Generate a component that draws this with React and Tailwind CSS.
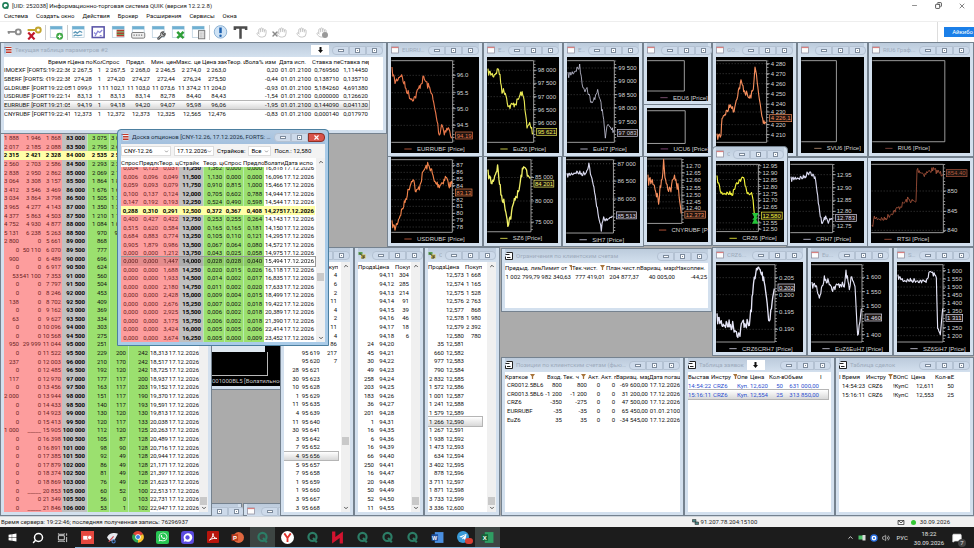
import clsx from "clsx";
import { FaWhatsapp, FaWindows, FaTelegramPlane, FaYandex } from "react-icons/fa";
import { Search, Minus, X, Copy, Hand, ChevronUp, Volume2, MessageSquare, Wrench } from "lucide-react";

const menu = ["Система", "Создать окно", "Действия", "Брокер", "Расширения", "Сервисы", "Окна"];

const params = [
  ["IMOEXF [FORTS:", "19:22:36", "2 267,5", "1", "2 267,5", "2 268,0", "2 246,5", "2 274,0", "2 263,0", "", "", "0,20", "01.01.2100", "0,769560", "1,114450"],
  ["SBERF [FORTS: Ф", "19:22:38", "274,28", "1", "274,20", "274,27", "272,44", "276,24", "275,50", "", "", "-0,44", "01.01.2100", "0,138710", "0,135710"],
  ["GLDRUBF [FORT", "19:22:05", "11 099,9", "1", "11 102,1", "11 103,0", "11 073,6", "11 374,2", "11 204,0", "", "", "-0,93", "01.01.2100", "5,184260", "4,691380"],
  ["USDRUBF [FORT", "19:22:14", "83,13", "1", "83,13", "83,14", "82,78", "84,40", "84,43", "", "", "-1,54", "01.01.2100", "0,000000", "0,126620"],
  ["EURRUBF [FORT", "19:21:05", "94,19", "1", "94,18", "94,20", "94,07", "95,98", "96,06", "", "", "-1,95", "01.01.2100", "0,144090", "0,041130"],
  ["CNYRUBF [FORT", "19:22:41", "12,373", "1", "12,372", "12,373", "12,325", "12,565", "12,476", "", "", "-0,83", "01.01.2100", "0,000140", "0,017970"],
];

const board = `1 888|1 946|1 868|83 000|3 075|3 020|||
2 017|2 185|2 088|83 500|2 795|2 680|||
2 315|2 421|2 328|84 000|2 535|2 510|||
2 560|2 703|2 586|84 500|2 293|2 200|||
2 838|2 950|2 862|85 000|2 069|2 100|||
3 064|3 308|3 157|85 500|1 864|1 830|||
3 412|3 546|3 469|86 000|1 676|1 600|||
3 034|3 864|3 798|86 500|1 505|1 200|||
3 965|4 277|4 143|87 000|1 350|1 200|||
4 377|5 863|4 503|87 500|1 210|1 100|||
4 752|4 930|4 877|88 000|1 084|1 000|||
5 131|6 238|5 263|88 500|970|9 00|||
2 800|0|5 661|89 000|868|||
0|50 110|6 070|89 500|777|||
900|0|6 489|90 000|696|||
0|0|6 917|90 500|624|||
53|541 100|7 353|91 000|560|||
0|0|7 797|91 500|504|||
0|0|8 246|92 000|453|||
138|0|8 702|92 500|409|||
0|0|9 162|93 000|369|||
63|0|9 627|93 500|334|||
0|0|10 096|94 000|303|||
0|0|10 568|94 500|275|||
950|29 999|11 044|95 000|251||||
0|0|11 522|95 500|229|200|242|18,313|17.12.2026
237|0|12 003|96 000|210|170|242|18,517|17.12.2026
0|0|12 485|96 500|192|120|242|18,725|17.12.2026
117|0|12 970|97 000|177|117|200|18,937|17.12.2026
0|0|13 456|97 500|163|117|203|19,152|17.12.2026
12 000|0|13 944|98 000|151|117|190|19,370|17.12.2026
0|0|14 433|98 500|140|117|193|19,591|17.12.2026
0|0|14 923|99 000|130|120|130|19,813|17.12.2026
0|0|15 413|99 500|120|117|133|20,038|17.12.2026
1 000|_____|15 905|100 000|112|120|125|20,263|17.12.2026
0|0|16 398|100 500|105|87|128|20,489|17.12.2026
0|0|16 891|101 000|98|90|128|20,716|17.12.2026
0|0|17 385|101 500|92|49|128|20,944|17.12.2026
0|0|17 879|102 000|86|49|128|21,171|17.12.2026
0|0|18 374|102 500|81|49|128|21,397|17.12.2026
0|0|18 869|103 000|76|49|128|21,623|17.12.2026
0|_____|20 853|105 000|60|52|100|22,513|17.12.2026
0|0|21 349|105 500|56|0|103|22,731|17.12.2026
0|_____|21 846|106 000|53|1|102|22,947|17.12.2026`.split("\n").map((r) => r.split("|"));

const options = `0,004|0,123|0,031|11,250|1,362|0,000|0,000|16,818
0,006|0,096|0,049|11,500|1,130|0,000|0,000|16,096
0,059|0,093|0,079|11,750|0,910|0,815|1,000|15,466
0,100|0,137|0,124|12,000|0,705|0,602|0,788|14,944
0,147|0,192|0,193|12,250|0,524|0,490|0,598|14,544
0,288|0,310|0,291|12,500|0,372|0,367|0,408|14,275
0,400|0,427|0,422|12,750|0,253|0,255|0,264|14,143
0,515|0,620|0,584|13,000|0,165|0,165|0,181|14,150
0,684|0,883|0,774|13,250|0,105|0,110|0,121|14,295
0,905|1,879|0,986|13,500|0,067|0,064|0,080|14,572
0,000|0,000|1,212|13,750|0,043|0,025|0,058|14,975
0,000|0,000|1,447|14,000|0,028|0,028|0,040|15,494
0,000|0,000|1,688|14,250|0,020|0,015|0,026|16,118
0,000|0,000|1,933|14,500|0,014|0,002|0,017|16,835
0,000|0,000|2,180|14,750|0,011|0,002|0,020|17,633
0,000|0,000|2,428|15,000|0,009|0,004|0,015|18,499
0,000|0,000|2,676|15,250|0,007|0,002|0,018|19,422
0,000|0,000|2,925|15,500|0,006|0,002|0,018|20,389
0,000|0,000|3,175|15,750|0,006|0,002|0,018|21,390
0,000|0,000|3,424|16,000|0,005|0,005|0,006|22,414
0,000|0,000|3,674|16,250|0,005|0,000|0,009|23,452`.split("\n").map((r) => [...r.split("|"), "17.12.2026"]);

const toRows = (s) => s.split(";").map((r) => r.split("|"));

const domEu = toRows("||4;||6;||2;||11;||4;||2;||11;||4;||86;|95 619|217;|95 620|7;28|95 621|;30|95 623|;10|95 628|;1|95 629|;11|95 635|;4|95 639|;11|95 640|;30|95 641|;3|95 642|;7|95 652|;4|95 656|;5|95 657|;7|95 658|;1|95 659|;1|95 660|;3|95 667|;3|95 668|");
const domEur = toRows("|94,11|304;|94,12|285;|94,13|214;|94,14|91;|94,15|39;|94,16|46;|94,17|18;|94,18|6;24|94,20|;45|94,21|;30|94,22|;49|94,23|;258|94,24|;203|94,25|;183|94,26|;36|94,27|;201|94,28|;1|94,31|;16|94,35|;6|94,36|;16|94,39|;66|94,40|;250|94,41|;16|94,47|;20|94,48|;50|94,49|;52|94,50|;11|94,55|");
const domCny = toRows("|12,573|1 668;|12,574|1 165;|12,575|1 528;|12,576|2 763;|12,577|868;|12,578|1 980;|12,579|2 392;|12,580|780;35|12,581|;660|12,582|;977|12,583|;790|12,584|;2 832|12,585|;1 572|12,586|;1 001|12,587|;1 241|12,588|;1 579|12,589|;1 266|12,590|;1 267|12,591|;1 938|12,592|;1 473|12,593|;634|12,594|;3 402|12,595|;878|12,596|;3 711|12,597|;1 871|12,598|;3 733|12,599|;3 336|12,600|");

const limits = [["1 002 799,79", "982 340,63", "777 419,01", "204 877,37", "40 005,00", "-44,25"]];

const positions = [
  ["CR0012.5BL6", "800", "800", "0", "0", "-69 600,00", "17.12.2026"],
  ["CR0013.5BL6", "-1 200", "-1 200", "0", "0", "31 200,00", "17.12.2026"],
  ["CRZ6", "-350", "-275", "0", "0", "47 500,00", "17.12.2026"],
  ["EURRUBF", "-35", "-35", "0", "0", "65 450,00", "01.01.2100"],
  ["EuZ6", "35", "35", "0", "0", "-34 545,00", "17.12.2026"],
];

const orders = [
  ["14:54:22", "CRZ6", "Куп.", "12,620", "50", "631 000,00", ""],
  ["15:16:11", "CRZ6", "Куп.", "12,554", "25", "313 850,00", ""],
];

const trades = [
  ["", "14:54:23", "CRZ6", "!КупС", "12,611", "50"],
  ["", "15:16:11", "CRZ6", "!КупС", "12,553", "25"],
];

/* ---------- window chrome ---------- */

function WinIcon({ kind }) {
  if (kind === "table") {
    return (
      <svg viewBox="0 0 16 16" className="size-2 shrink-0">
        <rect x="1" y="1" width="14" height="14" fill="#f4f4f4" />
        <path d="M1 3h14M4 7h11M4 10h11M4 13h11" stroke="#c0392b" strokeWidth="2" />
        <path d="M2 1v14" stroke="#5b9bd5" strokeWidth="2" />
      </svg>
    );
  }
  if (kind === "dom") {
    return (
      <svg viewBox="0 0 16 16" className="size-2 shrink-0">
        <rect x="1" y="2" width="8" height="6" fill="#5aa04f" />
        <rect x="6" y="7" width="9" height="8" fill="#d8c24a" />
        <path d="M3 4l9 9M12 8v6H7" stroke="#3b3b3b" strokeWidth="2" fill="none" />
      </svg>
    );
  }
  if (kind === "doc") {
    return (
      <svg viewBox="0 0 16 16" className="size-2 shrink-0">
        <path d="M3 1h12v14H1V9" fill="#fff" stroke="#222" strokeWidth="2" />
        <path d="M1 5h8M4 11h7" stroke="#222" strokeWidth="2" />
      </svg>
    );
  }
  return (
    <svg viewBox="0 0 16 16" className="size-2 shrink-0">
      <rect x="1" y="2" width="14" height="12" fill="#fdfdfd" stroke="#8d8d9d" strokeWidth="1.5" />
      <path d="M1 3h14" stroke="#d98080" strokeWidth="2.5" />
    </svg>
  );
}

function CaptionButtons({ active }) {
  const base = "flex h-[9px] w-[17px] items-center justify-center border";
  const cold = "border-[#b4c2d3] bg-[#cddaea]";
  return (
    <div className="flex shrink-0">
      <button aria-label="Свернуть" className={clsx(base, cold, "rounded-l-sm")}>
        <span className="h-[3px] w-[6px] border border-[#7d8b9c] bg-white" />
      </button>
      <button aria-label="Развернуть" className={clsx(base, cold)}>
        <span className="flex size-[5px] items-center justify-center border border-[#7d8b9c] bg-white">
          <span className="size-px bg-[#7d8b9c]" />
        </span>
      </button>
      <button
        aria-label="Закрыть"
        className={clsx(base, "rounded-r-sm", active ? "border-[#8e2f25] bg-[#d9534a]" : cold)}
      >
        {active ? (
          <X className="size-[7px] text-white" strokeWidth={4} />
        ) : (
          <span className="flex size-[5px] items-center justify-center border border-[#7d8b9c] bg-white">
            <span className="size-px bg-[#7d8b9c]" />
          </span>
        )}
      </button>
    </div>
  );
}

function Win({ className, title, icon = "chart", bare, active, pin, children }) {
  return (
    <section
      className={clsx(
        "absolute flex flex-col border px-[3px] pb-[3px]",
        active ? "rounded-t border-[#4c7fa0] bg-[#a9cbe8]" : "border-[#75828f] bg-[#d3e0ee]",
        className
      )}
    >
      {!bare && (
        <header
          className={clsx(
            "flex h-[14px] shrink-0 items-center gap-[3px] bg-linear-to-b",
            active ? "from-[#b4cbe2] to-[#a3c0de]" : "from-[#bccbdc] to-[#d3e0ee]"
          )}
        >
          <WinIcon kind={icon} />
          <h2
            className={clsx(
              "min-w-0 truncate text-[6px] leading-[10px]",
              pin !== "title" && "flex-1",
              active ? "text-[#22303f]" : "text-[#9dabbc]"
            )}
          >
            {title}
          </h2>
          {pin && (
            <button
              aria-label="Закрепить"
              className={clsx("flex h-[10px] w-[18px] shrink-0 items-center justify-center bg-white", pin === "title" && "mr-auto")}
            >
              <svg viewBox="0 0 10 12" className="h-[6px] w-[5px]">
                <path d="M3 0h4v6h3l-5 6-5-6h3z" fill="#111" />
              </svg>
            </button>
          )}
          <CaptionButtons active={active} />
        </header>
      )}
      <div className="flex min-h-0 flex-1 overflow-hidden bg-white">{children}</div>
    </section>
  );
}

function ScrollBar({ thumb }) {
  return (
    <div className="ml-auto flex w-[9px] shrink-0 flex-col items-center justify-between bg-[#f0f0f0] text-[#555]">
      <ChevronUp className="mt-px size-[6px]" strokeWidth={4} />
      <div className="flex w-full flex-1 flex-col px-px">
        <div className={thumb} />
        <div className="h-2 shrink-0 bg-[#c9c9c9]" />
      </div>
      <ChevronUp className="mb-px size-[6px] rotate-180" strokeWidth={4} />
    </div>
  );
}

function Filter() {
  return (
    <svg viewBox="0 0 8 8" className="ml-[2px] size-[5px] shrink-0">
      <path d="M0 0h8L5 4v4H3V4z" fill="#a8743a" />
    </svg>
  );
}

// cols is a grid template class, cells holds one class string per column
function Grid({ cols, head, rows, cells = [], body, rowClass, filters = [], headClass, label }) {
  return (
    <table aria-label={label} className="flex min-w-0 flex-col text-[6px] leading-[8px] whitespace-nowrap text-[#111]">
      {head && (
        <thead className={clsx("relative block shrink-0 bg-white", headClass)}>
          <tr className={clsx("grid h-[9px]", cols)}>
            {head.map((h, i) => (
              <th key={i} scope="col" className="flex items-center overflow-hidden text-left font-normal">
                {h}
                {filters.includes(i) && <Filter />}
              </th>
            ))}
          </tr>
        </thead>
      )}
      <tbody className={clsx("grid min-h-0 auto-rows-fr", body)}>
        {rows.map((row, r) => (
          <tr key={r} className={clsx("grid min-h-0", cols, rowClass && rowClass(r))}>
            {row.map((c, i) => (
              <td key={i} className={clsx("flex min-h-0 items-center", cells[i] || "justify-end pr-px")}>
                {c}
              </td>
            ))}
          </tr>
        ))}
      </tbody>
    </table>
  );
}

/* ---------- price charts, three drawing units per pixel ---------- */

function jagged(points, amp) {
  let seed = 7;
  const rnd = () => {
    seed = (seed * 16807) % 2147483647;
    return seed / 2147483647 - 0.5;
  };
  const out = [];
  for (let i = 0; i < points.length - 1; i++) {
    const [x0, y0] = points[i];
    const [x1, y1] = points[i + 1];
    const n = Math.max(2, Math.round((x1 - x0) / 2.2));
    for (let k = 0; k < n; k++) {
      const t = k / n;
      out.push([x0 + (x1 - x0) * t, y0 + (y1 - y0) * t + rnd() * amp]);
    }
  }
  out.push(points[points.length - 1]);
  return out.map((p) => p.map((v) => v.toFixed(1)).join(",")).join(" ");
}

function Chart({ w, h, name, frame, labels = [], tag, line, color = "#f58d5c", amp = 20, thin = 3.4, tx = 78, ly, marker, legend = "#d06040" }) {
  const [right, top, bottom] = frame;
  const base = ly || bottom + 20;
  const grid = labels.filter(([, y]) => y > top && y < bottom);
  return (
    <div className="min-w-0 flex-1 overflow-hidden bg-black">
      <svg
        viewBox={`0 0 ${w} ${h}`}
        preserveAspectRatio="xMinYMin slice"
        className="block size-full"
        fontFamily="Liberation Sans, Arial, sans-serif"
        fontSize="18"
        role="img"
        aria-label={name}
      >
        <rect width={w} height={h} fill="#000" />
        {grid.map(([t, y]) => (
          <path key={t} d={`M2 ${y}H${right}`} stroke="#5a5a5a" strokeWidth="2" strokeDasharray="3 6" />
        ))}
        <path d={`M1 ${top}H${right}V${bottom}H1`} fill="none" stroke="#b8b8b8" strokeWidth="2.5" />
        {labels.length > 0 && (
          <path d={`M${right + 3} ${top}V${bottom}`} stroke="#b8b8b8" strokeWidth="5" strokeDasharray="2 8" />
        )}
        {line && (
          <polyline points={jagged(line, amp)} fill="none" stroke={color} strokeWidth={thin} strokeLinejoin="round" />
        )}
        {marker && <path d={marker} fill="#25c43a" />}
        {labels.map(([t, y]) => (
          <g key={t}>
            <path d={`M${right} ${y}h9`} stroke="#b8b8b8" strokeWidth="2.5" />
            <text x={right + 12} y={y + 6} fill="#d4d4d4">{t}</text>
          </g>
        ))}
        {tag && (
          <g>
            <rect x={right + 9} y={tag[1] - 11} width={tag[2]} height="21" fill="#1c1410" stroke={color} strokeWidth="2" />
            <text x={right + 12} y={tag[1] + 6} fill={color}>{tag[0]}</text>
          </g>
        )}
        {name && (
          <g>
            <path d={`M${tx - 38} ${base}h22`} stroke={legend} strokeWidth="2.5" />
            <text x={tx} y={base + 6} fill="#d4d4d4">{name}</text>
          </g>
        )}
      </svg>
    </div>
  );
}

/* ---------- top bars ---------- */

function ToolIcon({ kind }) {
  const win = (
    <>
      <rect x="2" y="2" width="19" height="18" fill="#fff" stroke="#a9c3d4" />
      <rect x="2" y="2" width="19" height="5" fill="#6fb0d2" />
    </>
  );
  const art = {
    key: <path d="M1 11h13M3 11v3M14 11a4 4 0 1 0 8 0a4 4 0 1 0-8 0" fill="none" stroke="#8b8b8b" strokeWidth="3" />,
    keyx: (
      <>
        <path d="M1 8h13M14 8a4 4 0 1 0 8 0a4 4 0 1 0-8 0" fill="none" stroke="#c2a52e" strokeWidth="3" />
        <path d="M2 12l10 11M12 12L2 23" stroke="#c0182c" strokeWidth="3.5" />
      </>
    ),
    add: <>{win}<circle cx="17" cy="18" r="5.500" fill="#3fa845" /><path d="M14 18h6M17 15v6" stroke="#fff" strokeWidth="2" /></>,
    wave: <>{win}<path d="M4 13l3-2 3 2 4-3 4 2M4 18l3-2 4 1 7-1" stroke="#5a97b8" fill="none" strokeWidth="2" /></>,
    plot: <><rect x="2" y="3" width="19" height="17" fill="#fff" stroke="#5a54a8" strokeWidth="2.5" /><path d="M5 12l3 3 3-5 3 2 4-4M6 17h2M14 17h3" stroke="#8a86d8" fill="none" strokeWidth="2" /></>,
    rows: <>{win}<path d="M9 9h12M9 13h12M9 17h12" stroke="#b8382c" strokeWidth="3" /><path d="M9 11h12M9 15h12" stroke="#4f9b45" strokeWidth="1.500" /></>,
    kbd: <>{win}<rect x="1" y="12" width="21" height="9" rx="2" fill="#eee" stroke="#777" strokeWidth="1.500" /><path d="M4 16h15" stroke="#777" strokeWidth="2" strokeDasharray="2 2" /></>,
    cross: <>{win}<path d="M10 11l10 10M20 11L10 21" stroke="#2e9e38" strokeWidth="4" /></>,
    calc: <>{win}<rect x="12" y="9" width="10" height="13" fill="#e8e8e8" stroke="#777" strokeWidth="1.500" /><path d="M14 13h6M14 16h6M14 19h6" stroke="#888" strokeDasharray="1.500 1" /></>,
    info: <><circle cx="12" cy="11" r="10" fill="#cfe3f5" stroke="#86aed2" strokeWidth="1.500" /><path d="M12 4v9" stroke="#1b5fae" strokeWidth="4" /><circle cx="12" cy="17" r="2" fill="#1b5fae" /></>,
    text: <path d="M3 8V4h18v4M12 3v19" stroke="#4c4c4c" strokeWidth="4" fill="none" />,
    wrench: win,
  }[kind];
  return (
    <span className="relative flex">
      <svg viewBox="0 0 24 24" className="size-[15px]">{art}</svg>
      {kind === "wrench" && <Wrench className="absolute right-0 bottom-0 size-[9px] text-[#555]" strokeWidth={3} />}
    </span>
  );
}

const tools = [["key", "keyx"], ["add"], ["wave", "plot", "rows", "kbd", "wrench", "cross", "calc"], ["info", "text"]];

function TopBars() {
  return (
    <header className="shrink-0 bg-white">
      <div className="flex h-[11px] items-center pl-[2px]">
        <svg viewBox="0 0 16 16" className="size-[7px]">
          <circle cx="8" cy="8" r="6" fill="none" stroke="#1d7d57" strokeWidth="3.500" />
          <path d="M9 10l5 5" stroke="#1d7d57" strokeWidth="3" />
        </svg>
        <h1 className="ml-[3px] text-[6px] leading-[10px] text-[#222]">
          [UID: 252038] Информационно-торговая система QUIK (версия 12.2.2.8)
        </h1>
        <div className="ml-auto flex text-[#444]">
          <button aria-label="Свернуть окно" className="flex w-6 justify-center"><Minus className="size-[7px]" /></button>
          <button aria-label="Восстановить окно" className="flex w-6 justify-center"><Copy className="size-[7px] -scale-x-100" strokeWidth={3} /></button>
          <button aria-label="Закрыть программу" className="flex w-6 justify-center"><X className="size-[8px]" /></button>
        </div>
      </div>
      <nav className="flex h-[10px] items-center gap-2 pl-1 text-[6px] leading-[10px] text-[#111]">
        {menu.map((m) => (
          <button key={m}>{m}</button>
        ))}
      </nav>
      <div className="flex h-[21px] items-center border-t border-[#eee] pl-1">
        {tools.map((group, g) => (
          <div key={g} className={clsx("flex pr-px", g < 3 && "border-r border-[#ccc]")}>
            {group.map((t) => (
              <button key={t} aria-label={t} className="flex w-5 justify-center"><ToolIcon kind={t} /></button>
            ))}
          </div>
        ))}
        {[0, 1, 2, 3].map((i) => (
          <button key={i} aria-label={`Заявка ${i + 1}`} disabled className="relative flex w-5 justify-center text-[#c2c2c2]">
            <Hand className="size-[11px]" />
            {i === 1 && <X className="absolute bottom-0 left-0 size-[8px] text-[#888]" strokeWidth={4} />}
            {i === 3 && <span className="absolute right-[3px] bottom-0 size-[6px] rounded-full bg-[#999]" />}
          </button>
        ))}
        <div className="ml-auto flex h-full items-center border-l border-[#ddd] pl-[6px]">
          <button className="h-[10px] bg-[#1b7fe8] pr-px pl-2 text-[6px] leading-[10px] whitespace-nowrap text-white">
            Айкибо
          </button>
        </div>
      </div>
    </header>
  );
}

/* ---------- boards ---------- */

const pink = "justify-end bg-[#fd9d9d] text-[#6b1f1f] pr-px";
const green = "justify-end bg-[#9be06f] pr-[2px] border-l border-[#b4ecb0]";
const strike = "justify-end bg-[#c0c0c0] font-bold text-black pr-[2px]";
const boardCells = [pink, pink, pink, strike, green, green, green, "justify-end pr-px", "justify-end pr-px"];

const yellowRow = "font-bold text-black [&>td]:border-[#ffffa8] [&>td]:bg-[#ffffa8] [&>td]:text-black";
const currentRow = "bg-linear-to-b from-white to-[#d8d8d8] outline outline-[#b5b5b5]";

function Pick({ label, value, width }) {
  return (
    <div className={clsx("relative flex items-center", width)}>
      <select aria-label={label} className="h-[10px] w-full appearance-none border border-[#ddd] bg-white pl-[2px] text-[6px] leading-[8px]">
        <option>{value}</option>
      </select>
      <ChevronUp className="pointer-events-none absolute right-[2px] size-[5px] rotate-180 text-[#666]" strokeWidth={3} />
    </div>
  );
}

function OptionBoard() {
  return (
    <Win className="top-[87px] left-[117px] h-[217px] w-[212px]" title="Доска опционов [CNY-12.26, 17.12.2026, FORTS: ..." icon="table" active>
      <div className="flex min-w-0 flex-1 flex-col">
        <div className="flex h-[14px] shrink-0 items-center gap-[3px] bg-[#f3f3f3] text-[6px] leading-[8px]">
          <Pick label="Базовый актив" value="CNY-12.26" width="w-[50px]" />
          <Pick label="Дата исполнения" value="17.12.2026" width="w-[40px]" />
          <span>Страйков:</span>
          <Pick label="Страйков" value="Все" width="w-[23px]" />
          <span>Посл.: 12,580</span>
        </div>
        <div className="flex min-h-0 flex-1 overflow-hidden">
          <Grid
            label="Доска опционов CNY"
            cols="grid-cols-[18px_20px_20px_24px_21px_19px_21px_20px_31px]"
            head={["Спрос", "Предло", "Теор. ц", "Страйк", "Теор. це", "Спрос", "Предло", "Волати", "Дата испо"]}
            headClass="z-10"
            rows={options}
            cells={boardCells}
            body="-mt-[3px] flex-1"
            rowClass={(r) => (r === 5 ? yellowRow : r === 11 ? "outline outline-[#9a9a9a] [&>td]:brightness-90" : "")}
          />
          <ScrollBar thumb="h-[108px]" />
        </div>
      </div>
    </Win>
  );
}

function Dom({ className, title, cols, rows, current, thumb, label }) {
  return (
    <Win className={className} title={title} icon="dom">
      <Grid
        label={label}
        cols={cols}
        head={["Прода", "Цена", "Покуп"]}
        rows={rows}
        body="flex-1"
        rowClass={(r) => r === current && currentRow}
      />
      <ScrollBar thumb={thumb} />
    </Win>
  );
}

function Desktop() {
  return (
    <main className="relative min-h-0 flex-1 overflow-hidden bg-[#ababab]">
      {/* volatility chart and two minimised windows under the boards */}
      <Win bare className="top-[288px] left-[200px] h-[60px] w-[84px]">
        <div className="flex flex-1 flex-col bg-black pl-2">
          <div className="h-[21px] w-[53px] bg-[#dfe8f0]" />
          <div className="h-6 w-[56px] border-r border-b border-[#b8b8b8]" />
          <span className="overflow-hidden text-[6px] leading-[10px] whitespace-nowrap text-[#c8c8c8]">001000BL5 [Волатильность</span>
        </div>
      </Win>
      <Win className="bottom-0 left-[176px] h-[13px] w-[66px]" title="" />
      <Win className="bottom-0 left-[243px] h-[13px] w-[64px]" title="" />

      <Win className="top-0 left-0 h-[92px] w-[387px]" title="Текущая таблица параметров #2" icon="table" pin="right">
        <Grid
          label="Текущая таблица параметров"
          cols="grid-cols-[44px_22px_23px_9px_24px_25px_25px_26px_25px_18px_14px_20px_33px_28px_29px]"
          head={["", "Время п", "Цена по", "Кол-", "Спрос", "Предл.", "Мин. цен", "Макс. це", "Цена зак", "Теор. ц", "Вола", "% изм", "Дата исп.", "Ставка пер", "Ставка пер"]}
          rows={params}
          body="h-[52px]"
          cells={["overflow-hidden", "overflow-hidden"]}
          rowClass={(r) => r === 4 && currentRow}
        />
      </Win>

      <Win bare className="top-[91px] bottom-0 left-0 w-[212px]">
        <Grid
          label="Доска опционов"
          cols="grid-cols-[16px_22px_20px_25px_22px_19px_22px_19px_31px]"
          rows={board}
          cells={boardCells}
          body="flex-1"
          rowClass={(r) => r === 2 && yellowRow}
        />
        <ScrollBar thumb="flex-1" />
      </Win>

      <Dom
        className="top-[205px] bottom-0 left-[280px] w-[74px]"
        title=""
        label="Стакан EuZ6"
        cols="grid-cols-[16px_21px_17px]"
        rows={domEu}
        current={21}
        thumb="h-[168px]"
      />
      <Dom
        className="top-[205px] bottom-0 left-[354px] w-[70px]"
        title=""
        label="Стакан EURRUBF"
        cols="grid-cols-[17px_20px_15px]"
        rows={domEur}
        thumb="flex-1"
      />
      <Dom
        className="top-[205px] bottom-0 left-[424px] w-[76px]"
        title="С"
        label="Стакан CRZ6"
        cols="grid-cols-[17px_20px_17px]"
        rows={domCny}
        current={17}
        thumb="flex-1"
      />

      <Win className="top-0 left-[387px] h-[115px] w-[96px]" title="EURRU...">
        <Chart w={264} h={290} name="EURRUBF [Price]" frame={[185, 11, 256]} color="#e8764a"
          labels={[["96.0", 55], ["95.5", 107], ["95.0", 155], ["94.5", 205]]} tag={["94.19", 236, 50]}
          line={[[3, 40], [12, 75], [30, 52], [45, 95], [60, 125], [72, 122], [85, 90], [98, 62], [110, 85], [120, 100], [130, 150], [138, 190], [145, 235], [152, 200], [160, 225], [172, 215], [183, 240]]} />
      </Win>
      <Win className="top-0 left-[483px] h-[115px] w-[80px]" title="E...">
        <Chart w={216} h={290} name="EuZ6 [Price]" frame={[140, 11, 256]} color="#e9e955" legend="#e9e955"
          labels={[["98 000", 40], ["97 500", 79], ["97 000", 119], ["96 500", 158], ["96 000", 197]]} tag={["95 621", 225, 60]}
          line={[[3, 45], [20, 55], [35, 35], [45, 100], [55, 105], [65, 150], [75, 145], [90, 135], [103, 107], [112, 130], [120, 215], [128, 200], [138, 228]]} />
      </Win>
      <Win className="top-0 left-[563px] h-[115px] w-[80px]" title="E...">
        <Chart w={216} h={290} name="EuH7 [Price]" frame={[142, 11, 256]} color="#c9c9dd" legend="#c9c9dd" thin={2.4}
          labels={[["99 500", 33], ["99 000", 73], ["98 500", 113], ["98 000", 153], ["97 500", 195]]} tag={["97 083", 228, 60]}
          line={[[3, 55], [20, 45], [30, 35], [38, 30], [50, 100], [60, 90], [75, 145], [90, 100], [100, 130], [110, 190], [115, 235], [122, 205], [132, 215], [140, 220]]} />
      </Win>
      <Win className="top-0 left-[643px] h-[63px] w-[69px]" title="">
        <Chart w={186} h={132} name="EDU6 [Price]" frame={[112, 11, 102]} legend="#8a5a80" />
      </Win>
      <Win bare className="top-[62px] left-[643px] h-[53px] w-[69px] pt-[3px]">
        <Chart w={186} h={132} name="UCU6 [Price]" frame={[112, 8, 104]} legend="#8a4a80" ly={120} />
      </Win>
      <Win className="top-0 left-[712px] h-[115px] w-[85px]" title="GO...">
        <Chart w={231} h={290} frame={[152, 11, 256]}
          labels={[["4 280", 20], ["4 270", 50], ["4 260", 80], ["4 250", 110], ["4 240", 141], ["4 230", 165], ["4 220", 203], ["4 210", 233]]} tag={["4 226,1", 184, 66]}
          line={[[3, 240], [15, 235], [18, 180], [35, 160], [45, 140], [52, 165], [65, 110], [75, 75], [85, 100], [100, 125], [112, 100], [117, 22], [128, 115], [140, 190], [150, 195]]} />
      </Win>
      <Win className="top-0 left-[797px] h-[115px] w-[71px]" title="">
        <Chart w={192} h={290} name="SVU6 [Price]" frame={[107, 11, 256]} legend="#b08a70" />
      </Win>
      <Win className="top-0 left-[868px] h-[115px] w-[106px]" title="RIU6 Граф...">
        <Chart w={297} h={290} name="RIU6 [Price]" frame={[220, 11, 256]} legend="#8a4a40" />
      </Win>

      <Win bare className="top-[114px] left-[387px] h-[91px] w-[96px]">
        <Chart w={264} h={260} name="USDRUBF [Price]" frame={[184, 8, 226]} color="#f0824a"
          labels={[["87", 25], ["86", 46], ["85", 67], ["84", 86], ["82", 128], ["81", 148], ["80", 169], ["79", 189], ["78", 210]]} tag={["83.13", 107, 50]}
          line={[[3, 200], [12, 215], [25, 180], [40, 140], [55, 90], [66, 60], [75, 108], [85, 90], [98, 40], [110, 25], [120, 35], [130, 75], [145, 85], [155, 75], [165, 60], [175, 85], [183, 80]]} />
      </Win>
      <Win bare className="top-[114px] left-[483px] h-[91px] w-[79px]">
        <Chart w={216} h={260} name="SZ6 [Price]" frame={[133, 8, 226]} color="#f0f066" legend="#e9e955" thin={4} amp={24}
          labels={[["85 000", 62], ["80 000", 133], ["75 000", 197]]} tag={["84 201", 81, 60]}
          line={[[3, 50], [15, 80], [32, 30], [42, 110], [55, 150], [63, 200], [72, 180], [85, 120], [95, 110], [105, 50], [115, 22], [122, 60], [131, 65]]} />
      </Win>
      <Win bare className="top-[114px] left-[562px] h-[91px] w-[82px]">
        <Chart w={220} h={260} name="SiH7 [Price]" frame={[141, 8, 226]} color="#d8d8ee" legend="#c9c9dd" amp={14}
          labels={[["87 000", 20], ["86 500", 72], ["86 000", 125]]} tag={["85 513", 174, 60]}
          line={[[3, 55], [30, 45], [50, 50], [60, 45], [68, 20], [75, 60], [85, 100], [95, 170], [105, 215], [112, 180], [122, 190], [138, 175]]} />
      </Win>
      <Win bare className="top-[114px] left-[643px] h-[90px] w-[69px]">
        <Chart w={186} h={256} name="CNYRUBF [Price]" frame={[105, 6, 200]} amp={34} tx={74}
          labels={[["12.70", 27], ["12.65", 48], ["12.60", 70], ["12.55", 92], ["12.50", 115], ["12.45", 135], ["12.40", 154]]} tag={["12.373", 174, 62]}
          line={[[3, 70], [20, 75], [35, 135], [50, 20], [58, 75], [70, 100], [85, 55], [95, 105], [103, 170]]} />
      </Win>
      <Win bare className="top-[115px] left-[786px] h-[90px] w-[82px] pt-[3px]">
        <Chart w={222} h={250} name="CRH7 [Price]" frame={[128, 10, 215]} color="#d8d8ee" legend="#c9c9dd" amp={16}
          labels={[["12.95", 41], ["12.90", 80], ["12.85", 118], ["12.80", 151], ["12.75", 195]]} tag={["12.783", 171, 62]}
          line={[[3, 55], [20, 50], [40, 50], [60, 30], [75, 50], [85, 120], [95, 190], [105, 170], [115, 180], [127, 175]]} />
      </Win>
      <Win bare className="top-[115px] left-[867px] h-[90px] w-[107px] pt-[3px]">
        <Chart w={297} h={250} name="RTSI [Price]" frame={[217, 10, 215]} color="#b0583f" legend="#a5503a" thin={2.4} amp={16}
          labels={[["850", 90], ["845", 151], ["840", 208]]} tag={["854.40", 37, 62]}
          line={[[3, 200], [10, 170], [40, 175], [70, 150], [90, 135], [110, 115], [135, 125], [138, 25], [160, 40], [185, 25], [215, 40]]} />
      </Win>
      <Win className="top-[104px] left-[712px] h-[100px] w-[76px] rounded-t" title="C...">
        <Chart w={204} h={241} name="CRZ6 [Price]" frame={[126, 10, 210]} color="#f2f23a" legend="#f2f23a" amp={14}
          labels={[["12.95", 14], ["12.90", 35], ["12.85", 55], ["12.80", 76], ["12.75", 97], ["12.70", 117], ["12.65", 138], ["12.55", 184], ["12.50", 203]]} tag={["12.580", 163, 62]}
          marker="M107 155h20l-7 12h5l-5 8 7 12h-20l6-12h-5l6-8z"
          line={[[3, 50], [15, 95], [50, 97], [60, 65], [82, 50], [95, 100], [108, 98], [115, 170], [119, 168]]} />
      </Win>

      <Win className="top-[205px] left-[712px] h-[109px] w-[95px]" title="CRZ6...">
        <Chart w={261} h={272} name="CRZ6CRH7 [Price]" frame={[177, 8, 240]} color="#e4e4f6" legend="#d0d0e0" amp={32} thin={4}
          labels={[["0.205", 47], ["0.200", 98], ["0.195", 149], ["0.190", 202]]} tag={["0.202", 77, 50]}
          line={[[3, 170], [20, 185], [50, 190], [70, 220], [80, 180], [100, 190], [110, 100], [115, 40], [128, 20], [145, 50], [160, 180], [175, 80]]} />
      </Win>
      <Win className="top-[205px] left-[807px] h-[109px] w-[86px]" title="Eu...">
        <Chart w={234} h={272} name="EuZ6EuH7 [Price]" frame={[153, 8, 240]} color="#e4e4f6" legend="#d0d0e0" amp={20} tx={72}
          labels={[["1 600", 46], ["1 550", 89], ["1 500", 133], ["1 400", 218]]} tag={["1 460", 167, 50]}
          line={[[3, 70], [15, 70], [25, 105], [40, 50], [55, 60], [65, 80], [90, 65], [100, 75], [105, 30], [115, 80], [120, 45], [132, 75], [140, 225], [151, 140]]} />
      </Win>
      <Win className="top-[205px] left-[893px] h-[109px] w-[81px]" title="S...">
        <Chart w={219} h={272} name="SZ6SiH7 [Price]" frame={[138, 8, 240]} color="#e4e4f6" legend="#d0d0e0" amp={14}
          labels={[["1 600", 26], ["1 550", 51], ["1 500", 75], ["1 450", 100], ["1 400", 124], ["1 350", 146], ["1 250", 197], ["1 200", 221]]} tag={["1 311", 168, 50]}
          line={[[3, 45], [20, 55], [60, 55], [85, 60], [100, 28], [118, 45], [122, 200], [130, 220], [137, 140]]} />
      </Win>

      <Win className="top-[206px] left-[501px] h-[64px] w-[211px]" title="Ограничения по клиентским счетам" icon="doc">
        <Grid
          label="Ограничения по клиентским счетам"
          cols="grid-cols-[36px_31px_34px_34px_36px_32px]"
          head={["Предыд. лим", "Лимит от", "Тек.чист.", "План.чист.п", "Вариац. марж", "Накоплен."]}
          filters={[1, 2]}
          rows={limits}
          body="h-[9px]"
        />
      </Win>
      <Win className="top-[315px] bottom-0 left-[501px] w-[183px]" title="Позиции по клиентским счетам (фью..." icon="doc">
        <Grid
          label="Позиции по клиентским счетам"
          cols="grid-cols-[42px_16px_25px_13px_15px_33px_32px]"
          head={["Краткое", "Вход. ч", "Тек. ч", "Акт. д", "Акт. п", "Вариац. мар", "Дата погаш"]}
          filters={[0, 2]}
          rows={positions}
          body="h-[43px]"
          cells={["pl-[2px]"]}
        />
      </Win>
      <Win className="top-[315px] bottom-0 left-[684px] w-[151px]" title="Таблица заявок" icon="doc" pin="title">
        <Grid
          label="Таблица заявок"
          cols="grid-cols-[23px_26px_13px_19px_15px_36px_8px]"
          head={["Выстав", "Инстру", "Опе", "Цена", "Кол-в", "Объем", "I"]}
          filters={[1]}
          rows={orders}
          body="h-[18px] text-[#2f4fd0]"
          cells={["overflow-hidden", "pl-[2px]", "overflow-hidden"]}
          rowClass={(r) => r === 1 && currentRow}
        />
      </Win>
      <Win className="top-[315px] bottom-0 left-[835px] w-[139px]" title="Таблица сделок" icon="doc">
        <Grid
          label="Таблица сделок"
          cols="grid-cols-[3px_24px_27px_18px_24px_20px]"
          head={["I", "Время", "Инстру", "ВОпС", "Цена", "Кол-вЕ"]}
          filters={[2]}
          rows={trades}
          body="h-[18px]"
          cells={["", "overflow-hidden", "pl-[2px]", "overflow-hidden"]}
        />
      </Win>

      <OptionBoard />
    </main>
  );
}

/* ---------- bottom bars ---------- */

function StatusBar() {
  return (
    <footer className="flex h-[11px] shrink-0 items-center border-t border-[#cfd6dd] bg-[#f1f1f1] text-[6px] leading-[10px] text-[#222]">
      <span className="w-[71%] pl-px">Время сервера: 19:22:46; последняя полученная запись: 76296937</span>
      <svg viewBox="0 0 16 14" className="h-[6px] w-[7px]">
        <path d="M1 1h8v6H1zM7 7h8v6H7z" fill="#4a8a8a" stroke="#333" strokeWidth="1.500" />
      </svg>
      <span className="ml-[2px]">91.207.78.204:15100</span>
      <div className="ml-auto flex items-center gap-[6px] pr-6">
        <svg viewBox="0 0 16 12" className="h-[5px] w-[8px]">
          <path d="M1 1h14v10H1zl7 6 7-6" fill="#fff" stroke="#333" strokeWidth="2" />
        </svg>
        <span className="flex items-center gap-[4px]">
          <span className="size-[5px] rounded-full bg-[#35c935]" />
          30.09.2026
        </span>
      </div>
    </footer>
  );
}

function QuikIcon() {
  return (
    <svg viewBox="0 0 24 24" className="size-[13px]">
      <circle cx="12" cy="11" r="7.500" fill="none" stroke="#2c7d66" strokeWidth="4" />
      <path d="M13 13l7 8" stroke="#2c7d66" strokeWidth="4" />
    </svg>
  );
}

const apps = [
  ["Пуск", <FaWindows className="size-[9px] text-white" />],
  ["Поиск", <Search className="size-[12px] -scale-x-100 text-white" strokeWidth={3} />],
  ["Представление задач", (
    <svg viewBox="0 0 24 24" className="size-[11px]">
      <path d="M3 8h13v9H3zM3 3v2h13V3M3 22v-2h13v2M21 3v5M21 11v11" fill="none" stroke="#ddd" strokeWidth="2" />
    </svg>
  )],
  ["Запись", (
    <svg viewBox="0 0 24 24" className="size-[13px]">
      <rect width="24" height="24" fill="#e5483f" />
      <path d="M4 9h9v7H4z" fill="#fff" />
      <circle cx="16" cy="12" r="4" fill="#fff" stroke="#e5483f" strokeWidth="1.500" />
    </svg>
  )],
  ["Ножницы", (
    <svg viewBox="0 0 24 24" className="size-[13px]">
      <path d="M2 12c2-8 14-10 20-7l-6 11-9 3z" fill="#e6e9ee" />
      <path d="M5 20l9-10" stroke="#c9444f" strokeWidth="2" />
      <circle cx="14" cy="19" r="3" fill="none" stroke="#4a7fc8" strokeWidth="2" />
    </svg>
  )],
  ["Chrome", (
    <svg viewBox="0 0 24 24" className="size-[12px]">
      <path d="M12 12L2 6a11.500 11.500 0 0 1 20 0z" fill="#e3453a" />
      <path d="M12 12L22 6a11.500 11.500 0 0 1-10 17.500z" fill="#f6c22d" />
      <path d="M12 12v11.500A11.500 11.500 0 0 1 2 6z" fill="#2fa452" />
      <circle cx="12" cy="12" r="5.500" fill="#fff" />
      <circle cx="12" cy="12" r="4" fill="#3a7de0" />
    </svg>
  )],
  ["WhatsApp", <span className="flex size-[13px] items-center justify-center rounded-[2px] bg-[#27c552]"><FaWhatsapp className="size-[10px] text-white" /></span>],
  ["Мессенджер", (
    <svg viewBox="0 0 24 24" className="size-[13px]">
      <rect width="24" height="24" rx="6" fill="#5b4be0" />
      <path d="M12 4a8 8 0 1 1-3 15l-4 1 1-4A8 8 0 0 1 12 4z" fill="#fff" />
      <circle cx="12" cy="12" r="4" fill="#5b4be0" />
    </svg>
  )],
  ["Acrobat", (
    <svg viewBox="0 0 24 24" className="size-[12px]">
      <rect width="24" height="24" rx="2" fill="#b8140c" />
      <path d="M5 18c5-3 7-8 7-13 0 6 3 10 8 10-5-1-10 0-15 3z" fill="none" stroke="#fff" strokeWidth="2" />
    </svg>
  )],
  ["PowerPoint", (
    <svg viewBox="0 0 24 24" className="size-[13px]">
      <circle cx="14" cy="12" r="10" fill="#e0673f" />
      <rect x="1" y="6" width="12" height="12" fill="#b93a1c" />
      <text x="3.500" y="16" fontSize="11" fontWeight="700" fill="#fff" fontFamily="Liberation Sans">P</text>
    </svg>
  )],
  ["QUIK", <QuikIcon />],
  ["Yandex", <span className="flex size-[13px] items-center justify-center rounded-full bg-white"><svg viewBox="0 0 24 24" className="size-[11px]"><path d="M5 3l7 10L19 3M12 12v10" fill="none" stroke="#e0302a" strokeWidth="4" /></svg></span>],
  ["QUIK 2", <QuikIcon />],
  ["Новости", (
    <svg viewBox="0 0 24 24" className="size-[13px]">
      <path d="M2 1h6v10L22 1v22h-6V13L2 23z" fill="#d3132f" />
    </svg>
  )],
  ["QUIK 3", <QuikIcon />],
  ["QUIK 4", <QuikIcon />],
  ["QUIK 5", <QuikIcon />],
  ["Word", (
    <svg viewBox="0 0 24 24" className="size-[13px]">
      <rect x="7" y="2" width="16" height="20" fill="#4a8fe0" />
      <rect x="1" y="6" width="12" height="12" fill="#1b4fa0" />
      <text x="2" y="16" fontSize="10" fontWeight="700" fill="#fff" fontFamily="Liberation Sans">W</text>
    </svg>
  )],
  ["Telegram", (
    <span className="relative flex size-[12px] items-center justify-center rounded-full bg-[#3a9bd8]">
      <FaTelegramPlane className="size-[8px] text-white" />
      <span className="absolute -right-1 -bottom-px h-[6px] w-[8px] rounded-sm bg-[#d94034]" />
    </span>
  )],
  ["Excel", (
    <svg viewBox="0 0 24 24" className="size-[13px]">
      <rect x="7" y="2" width="16" height="20" fill="#2f9e63" />
      <rect x="1" y="6" width="12" height="12" fill="#126437" />
      <text x="3" y="16" fontSize="11" fontWeight="700" fill="#fff" fontFamily="Liberation Sans">X</text>
    </svg>
  )],
];

function Taskbar() {
  return (
    <footer className="flex h-[21px] shrink-0 items-stretch bg-[#1c1c1c]">
      {apps.map(([name, icon], i) => (
        <button
          key={name}
          aria-label={name}
          className={clsx(
            "flex w-[25px] items-center justify-center",
            i > 2 && "border-b border-[#8ab8d8]",
            (i === 10 || i === 19) && "bg-[#3d4543]"
          )}
        >
          {icon}
        </button>
      ))}
      <div className="ml-auto flex items-center gap-[4px] pr-3 text-[6px] leading-[9px] text-[#e4e4e4]">
        <ChevronUp className="size-[7px]" strokeWidth={3} />
        <svg viewBox="0 0 16 16" className="size-[8px]">
          <rect x="1" y="3" width="9" height="8" fill="#4cc26a" />
          <rect x="9" y="2" width="6" height="11" fill="#d8d8d8" />
        </svg>
        <svg viewBox="0 0 16 16" className="size-[8px]">
          <circle cx="8" cy="8" r="7.500" fill="#2a6fe0" />
          <circle cx="8" cy="8" r="3.500" fill="none" stroke="#fff" strokeWidth="2.500" />
        </svg>
        <Volume2 className="size-[8px]" />
        <span className="px-[2px]">РУС</span>
        <div className="text-center">
          <div>18:22</div>
          <div>30.09.2026</div>
        </div>
        <span className="relative ml-1 flex">
          <MessageSquare className="size-[10px] fill-white" />
          <span className="absolute -right-1 -bottom-1 flex size-[8px] items-center justify-center rounded-full bg-[#444] text-[6px] leading-[8px]">7</span>
        </span>
      </div>
    </footer>
  );
}

export default function App() {
  return (
    <div className="flex h-screen flex-col overflow-hidden font-['Roboto','Noto_Sans',sans-serif]">
      <TopBars />
      <Desktop />
      <StatusBar />
      <Taskbar />
    </div>
  );
}
